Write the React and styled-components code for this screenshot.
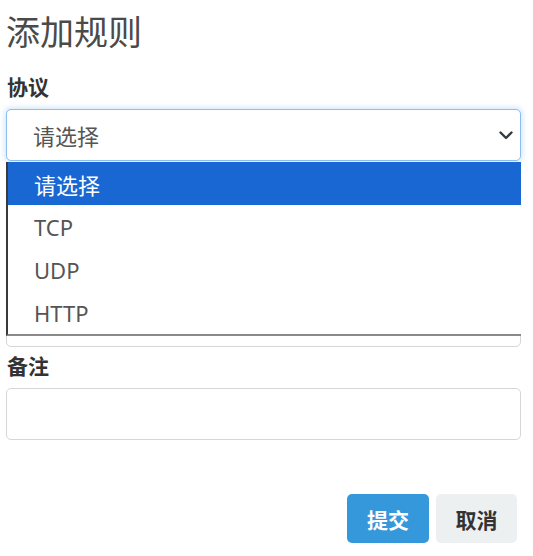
import React from "react";
import styled, { createGlobalStyle } from "styled-components";

const Global = createGlobalStyle`
  html, body { margin: 0; padding: 0; background: #fff; }
  body { font-family: "Noto Sans", "Noto Sans CJK SC", sans-serif; color: #333; }
  * { box-sizing: border-box; }
`;

const Page = styled.div`
  width: 533px;
  padding: 0 12px 0 6px;
`;

const Title = styled.h3`
  margin: 0;
  padding-top: 8px;
  height: 74px;
  font-size: 34px;
  line-height: 46px;
  font-weight: 400;
  color: #4a4a4a;
  font-family: "Noto Sans CJK SC", sans-serif;
`;

const Group = styled.div`
  position: relative;
  display: flex;
  flex-direction: column;
  padding-bottom: 6px;
`;

const Label = styled.label`
  display: block;
  height: 35px;
  padding-left: 1px;
  font-size: 21px;
  line-height: 24px;
  font-weight: 700;
  color: #333;
  font-family: "Noto Sans CJK SC", sans-serif;
`;

const Field = styled.div`
  position: relative;
  height: 52px;
  border: 1px solid ${(p) => (p.$focus ? "#8bbcf2" : "#d6d6d6")};
  border-radius: 5px;
  background: #fff;
  box-shadow: ${(p) => (p.$focus ? "0 0 5px 2px rgba(120,175,240,0.28)" : "none")};
  display: flex;
  align-items: center;
  padding-left: 26px;
  font-size: 22px;
  color: #555;
  font-family: "Noto Sans", "Noto Sans CJK SC", sans-serif;
`;

const Chevron = styled.svg`
  position: absolute;
  right: 7px;
  top: 50%;
  margin-top: -6px;
`;

const Menu = styled.ul`
  position: absolute;
  left: -1px;
  right: -1px;
  top: 52px;
  margin: 0;
  padding: 0;
  list-style: none;
  background: #fff;
  border-left: 2px solid #3a3a3a;
  border-bottom: 2px solid #8a8a8a;
  z-index: 10;
`;

const Option = styled.li`
  height: 43px;
  display: flex;
  align-items: center;
  padding-left: 26px;
  font-size: 22px;
  background: ${(p) => (p.$active ? "#1967d2" : "#fff")};
  color: ${(p) => (p.$active ? "#fff" : "#555")};
  font-family: "Noto Sans", "Noto Sans CJK SC", sans-serif;
`;

const Actions = styled.div`
  display: flex;
  justify-content: flex-end;
  gap: 7px;
  padding: 48px 4px 0 0;
`;

const Button = styled.button`
  width: ${(p) => p.$w}px;
  height: 49px;
  border: none;
  border-radius: 5px;
  font-size: 21px;
  font-weight: 700;
  font-family: "Noto Sans CJK SC", sans-serif;
  background: ${(p) => (p.$primary ? "#3498db" : "#ecf0f1")};
  color: ${(p) => (p.$primary ? "#fff" : "#333")};
`;

export default function App() {
  const options = ["请选择", "TCP", "UDP", "HTTP"];
  return (
    <Page>
      <Global />
      <Title>添加规则</Title>
      <Group>
        <Label>协议</Label>
        <Field $focus>
          请选择
          <Chevron width="14" height="12" viewBox="0 0 14 12">
            <path d="M1.5 3.5 L7 9 L12.5 3.5" fill="none" stroke="#343a40" strokeWidth="2.4" strokeLinecap="round" strokeLinejoin="round" />
          </Chevron>
          <Menu>
            {options.map((o, i) => (
              <Option key={o} $active={i === 0}>{o}</Option>
            ))}
          </Menu>
        </Field>
      </Group>
      <Group>
        <Label aria-hidden="true" />
        <Field />
      </Group>
      <Group>
        <Label aria-hidden="true" />
        <Field />
      </Group>
      <Group>
        <Label>备注</Label>
        <Field />
      </Group>
      <Actions>
        <Button $primary $w={82}>提交</Button>
        <Button $w={81}>取消</Button>
      </Actions>
    </Page>
  );
}
